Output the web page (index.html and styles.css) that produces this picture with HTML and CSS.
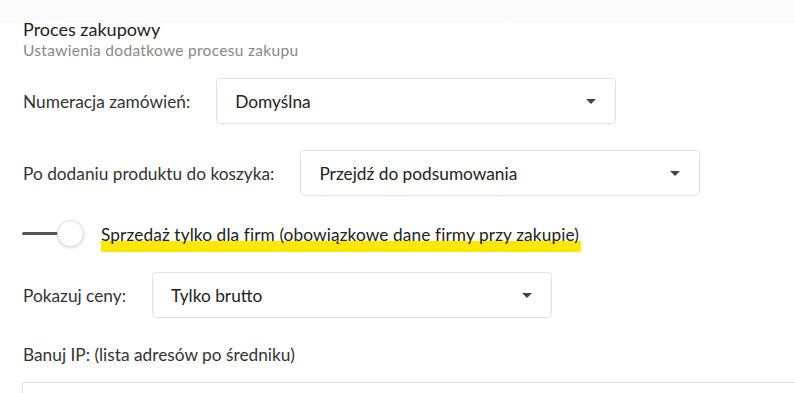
FILE: index.html
```html
<!DOCTYPE html>
<html lang="pl">
<head>
  <meta charset="UTF-8" />
  <title>Proces zakupowy</title>
  <meta name="viewport" content="width=device-width, initial-scale=1.0">
  <link rel="stylesheet" href="styles.css">
</head>
<body>
  <div class="top-strip"></div>
  <div class="section">
    <h2 class="section-title">Proces zakupowy</h2>
    <div class="section-sub">Ustawienia dodatkowe procesu zakupu</div>

    <div class="row row-first">
      <label class="row-label">Numeracja zamówień:</label>
      <div class="select">
        <span>Domyślna</span>
        <span class="caret"></span>
      </div>
    </div>

    <div class="row">
      <label class="row-label">Po dodaniu produktu do koszyka:</label>
      <div class="select">
        <span>Przejdź do podsumowania</span>
        <span class="caret"></span>
      </div>
    </div>

    <div class="toggle-row">
      <div class="toggle">
        <div class="toggle-track"></div>
        <div class="toggle-knob"></div>
      </div>
      <span class="marked">Sprzedaż tylko dla firm (obowiązkowe dane firmy przy zakupie)</span>
    </div>

    <div class="row row-after-toggle">
      <label class="row-label">Pokazuj ceny:</label>
      <div class="select">
        <span>Tylko brutto</span>
        <span class="caret"></span>
      </div>
    </div>

    <div class="ip-label">Banuj IP: (lista adresów po średniku)</div>
    <div class="ip-input"></div>
  </div>
</body>
</html>
```

FILE: styles.css
```css
body {
  margin: 0;
  background: #fff;
  color: #333;
  font-family: Lato, 'Liberation Sans', sans-serif;
  overflow: hidden;
}
.top-strip {
  height: 22px;
  background: linear-gradient(#fbfbfb, #fcfcfc);
}
.section {
  padding: 0 0 0 22px;
}
.section-title {
  margin: -4px 0 0 1px;
  font-size: 18px;
  font-weight: 400;
  color: #222;
  line-height: 22px;
}
.section-sub {
  margin: 1px 0 0 1px;
  font-size: 15.5px;
  letter-spacing: 0.3px;
  color: #888;
  line-height: 19px;
}
.row {
  display: flex;
  align-items: center;
  margin-top: 26px;
}
.row-first {
  margin-top: 18px;
}
.row-after-toggle {
  margin-top: 24px;
}
.row-label {
  font-size: 17.3px;
  margin-left: 1px;
  margin-right: 26px;
}
.select {
  height: 46px;
  border: 1px solid #e2e2e2;
  border-radius: 4px;
  display: flex;
  align-items: center;
  justify-content: space-between;
  padding: 0 19px 0 18px;
  box-sizing: border-box;
  width: 400px;
  font-size: 17.3px;
  color: #222;
}
.caret {
  width: 0;
  height: 0;
  border-left: 5px solid transparent;
  border-right: 5px solid transparent;
  border-top: 5px solid #444;
}
.toggle-row {
  display: flex;
  align-items: center;
  margin-top: 24px;
  height: 28px;
}
.toggle {
  position: relative;
  width: 62px;
  height: 28px;
  margin-right: 17px;
}
.toggle-track {
  position: absolute;
  left: 0;
  top: 12px;
  width: 40px;
  height: 3px;
  background: #555;
  border-radius: 2px;
}
.toggle-knob {
  position: absolute;
  left: 35px;
  top: 0;
  width: 25px;
  height: 25px;
  border-radius: 50%;
  background: #fff;
  border: 1px solid #ddd;
  box-shadow: 0 1px 3px rgba(0, 0, 0, 0.15);
}
.marked {
  font-size: 17.3px;
  letter-spacing: 0.1px;
  color: #222;
  line-height: 21px;
  padding: 5px 2px 8px 0;
  margin-top: 4px;
  background: linear-gradient(transparent 65%, #ffe800 65%, #ffe800 97%, transparent 97%);
}
.ip-label {
  margin-top: 26px;
  margin-left: 1px;
  font-size: 17.3px;
  line-height: 22px;
}
.ip-input {
  margin-top: 16px;
  height: 40px;
  border: 1px solid #e2e2e2;
  border-right: none;
  border-radius: 4px 0 0 4px;
}
```
